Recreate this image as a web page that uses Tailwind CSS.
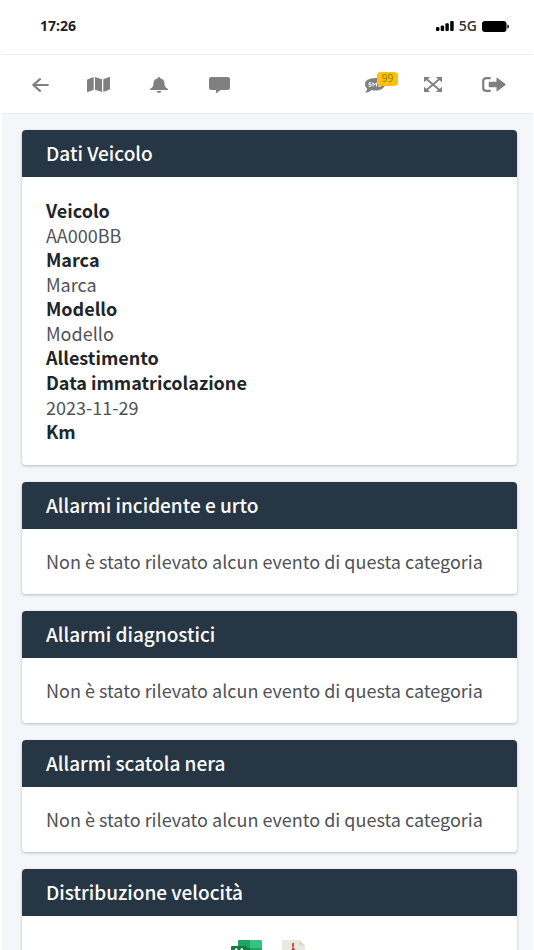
<!DOCTYPE html>
<html lang="it">
  <head>
    <meta charset="UTF-8" />
    <meta name="viewport" content="width=device-width, initial-scale=1.0" />
    <script src="https://cdn.jsdelivr.net/npm/@tailwindcss/browser@4"></script>
    <title>Dati Veicolo</title>
  </head>

  <body class="bg-white pl-0.5 pr-px font-['Noto_Sans_CJK_JP','Noto_Sans',sans-serif] text-lg leading-[25px] text-[#4f5256]">
    <div class="h-screen overflow-hidden bg-[#f4f6f9]">
      <!-- Status bar -->
      <div class="flex h-[54px] items-center justify-between bg-white pb-0.5 pl-[38px] pr-6">
        <span class="font-['Open_Sans',sans-serif] text-sm font-bold text-[#1c1c1e]">17:26</span>
        <div class="flex items-center gap-[5px] text-black">
          <svg class="h-[10px] w-[18px]" viewBox="0 0 18 10" fill="currentColor">
            <rect x="0" y="6" width="3.4" height="4" rx="1" />
            <rect x="4.7" y="4.5" width="3.4" height="5.5" rx="1" />
            <rect x="9.4" y="2.3" width="3.4" height="7.7" rx="1" />
            <rect x="14.2" y="0" width="3.5" height="10" rx="1" />
          </svg>
          <span class="font-['Open_Sans',sans-serif] text-sm font-semibold text-[#333]">5G</span>
          <svg class="h-[11px] w-[27px]" viewBox="0 0 27 11" fill="currentColor">
            <rect width="24.5" height="11" rx="3" />
            <path d="M25.3 3.6q1.7.5 1.7 1.900t-1.700 1.900z" />
          </svg>
        </div>
      </div>

      <!-- Navbar -->
      <nav class="flex h-[60px] items-center justify-between border-y border-[#e9ecef] bg-white pl-[25px] pr-[27px] pt-px text-[#808080]">
        <div class="flex items-center gap-[28px]">
          <button type="button" aria-label="Indietro" class="flex w-8 justify-start pl-[5px]">
            <svg class="h-[14px] w-[17px]" viewBox="0 0 17 14" fill="none" stroke="currentColor" stroke-width="2.2" stroke-linecap="round" stroke-linejoin="round">
              <path d="M8 1.2 1.3 7 8 12.8M1.5 7h14.3" />
            </svg>
          </button>
          <button type="button" aria-label="Mappa" class="flex w-8 justify-start">
            <svg class="h-[15px] w-[23px]" viewBox="0 0 23 15" fill="currentColor">
              <path d="M0 3.3q0-.7.8-1L6.7 0v12.8L1 14.9q-1 .3-1-.6zM8 0l7 2.2V15l-7-2.2zM16.3 2.2 22 .1q1-.3 1 .6v11q0 .7-.8 1L16.3 15z" />
            </svg>
          </button>
          <button type="button" aria-label="Notifiche" class="flex w-8 justify-start pl-[3px]">
            <svg class="h-[16px] w-[18px]" viewBox="0 0 18 16" fill="currentColor">
              <path d="M9 0q1.200 0 1.200 1.300 4.300.9 4.300 5.200 0 3.700 2.900 5 .6.4.6.900 0 .6-.8.6H.8q-.8 0-.8-.6 0-.5.600-.900Q3.500 10.200 3.500 6.500q0-4.300 4.300-5.200Q7.800 0 9 0zM6.600 14h4.800q-.4 2-2.400 2t-2.400-2z" />
            </svg>
          </button>
          <button type="button" aria-label="Messaggi" class="flex w-8 justify-start pl-[2px]">
            <svg class="h-[16px] w-[21px]" viewBox="0 0 21 16" fill="currentColor">
              <path d="M2.500 0h16Q21 0 21 2v9q0 2-2.500 2h-6.800L7.700 15.900q-.7.300-.7-.4V13H2.500Q0 13 0 11V2q0-2 2.500-2z" />
            </svg>
          </button>
        </div>
        <div class="flex items-center gap-[26px]">
          <button type="button" aria-label="SMS" class="relative flex w-[33px] justify-start">
            <svg class="mt-0.5 h-[15px] w-[20px]" viewBox="0 0 20 15" fill="currentColor">
              <path d="M10.500 0C16 0 20 2.700 20 6.200s-4 6.300-9.500 6.300q-2 0-3.800-.5Q4.600 14.300.8 14.700q-.8 0-.3-.7 1.500-1.600 1.700-3.300Q0 8.900 0 6.500 0 0 10.500 0z" />
              <path d="M6.300 4.800H4v1.600h2v1.800H3.600M8 8.400V4.800l1.800 2 1.800-2v3.600M16 4.800h-2.400v1.600h2v1.800h-2.300" fill="none" stroke="#fff" stroke-width="1" />
            </svg>
            <span class="absolute -top-[4px] left-3 h-[14px] w-[21px] rounded bg-[#ffc107] text-center font-['Open_Sans',sans-serif] text-[10px] leading-[13px] text-[#8c7430]">99</span>
          </button>
          <button type="button" aria-label="Schermo intero" class="flex w-[32px] justify-start">
            <svg class="h-[15px] w-[18px]" viewBox="0 0 18 15" fill="currentColor">
              <path d="M0 0h6.200L0 5.200zM11.800 0H18v5.200zM0 9.800 6.200 15H0zM18 9.800V15h-6.200z" />
              <path d="m2.200 1.800 13.600 11.400M15.800 1.800 2.200 13.200" fill="none" stroke="currentColor" stroke-width="1.900" />
            </svg>
          </button>
          <button type="button" aria-label="Esci" class="flex">
            <svg class="h-[15px] w-[24px]" viewBox="0 0 24 15" fill="currentColor">
              <path d="M8.700 1.200H4.500q-3.300 0-3.300 2.800v7q0 2.800 3.300 2.800h4.200" fill="none" stroke="currentColor" stroke-width="2.200" />
              <path d="M7.500 4.700h7V1.300q0-1.200 1.100-.4l7.900 6q.6.600 0 1.200l-7.900 6q-1.100.8-1.100-.4v-3.400h-7q-.8 0-.8-.8v-4q0-.8.8-.8z" />
            </svg>
          </button>
        </div>
      </nav>

      <!-- Cards -->
      <main class="space-y-[17px] pl-5 pr-4 pt-4">
        <section class="overflow-hidden rounded bg-white shadow-[0_1px_3px_rgba(0,0,0,0.25)]">
          <h2 class="bg-[#263644] px-6 pb-3 pt-[10px] text-[19px] font-medium text-white">Dati Veicolo</h2>
          <dl class="px-6 py-[21px]">
            <dt class="font-bold text-[#212529]">Veicolo</dt>
            <dd class="leading-6">AA000BB</dd>
            <dt class="font-bold text-[#212529]">Marca</dt>
            <dd class="leading-6">Marca</dd>
            <dt class="font-bold text-[#212529]">Modello</dt>
            <dd class="leading-6">Modello</dd>
            <dt class="font-bold text-[#212529]">Allestimento</dt>
            <dt class="font-bold text-[#212529]">Data immatricolazione</dt>
            <dd class="leading-6">2023-11-29</dd>
            <dt class="font-bold text-[#212529]">Km</dt>
          </dl>
        </section>

        <section class="overflow-hidden rounded bg-white shadow-[0_1px_3px_rgba(0,0,0,0.25)]">
          <h2 class="bg-[#263644] px-6 pb-3 pt-[10px] text-[19px] font-medium text-white">Allarmi incidente e urto</h2>
          <p class="px-6 py-5">Non è stato rilevato alcun evento di questa categoria</p>
        </section>

        <section class="overflow-hidden rounded bg-white shadow-[0_1px_3px_rgba(0,0,0,0.25)]">
          <h2 class="bg-[#263644] px-6 pb-3 pt-[10px] text-[19px] font-medium text-white">Allarmi diagnostici</h2>
          <p class="px-6 py-5">Non è stato rilevato alcun evento di questa categoria</p>
        </section>

        <section class="overflow-hidden rounded bg-white shadow-[0_1px_3px_rgba(0,0,0,0.25)]">
          <h2 class="bg-[#263644] px-6 pb-3 pt-[10px] text-[19px] font-medium text-white">Allarmi scatola nera</h2>
          <p class="px-6 py-5">Non è stato rilevato alcun evento di questa categoria</p>
        </section>

        <section class="overflow-hidden rounded bg-white shadow-[0_1px_3px_rgba(0,0,0,0.25)]">
          <h2 class="bg-[#263644] px-6 pb-3 pt-[10px] text-[19px] font-medium text-white">Distribuzione velocità</h2>
          <div class="flex justify-center gap-5 py-6 pl-5 pr-6">
            <button type="button" aria-label="Esporta Excel">
              <svg class="h-[28px] w-[31px]" viewBox="0 0 31 28">
                <path fill="#21a366" d="M7 1q0-1 1-1h11v8H7z" />
                <path fill="#33c481" d="M19 0h11q1 0 1 1v7H19z" />
                <path fill="#107c41" d="M7 8h12v7H7z" />
                <path fill="#21a366" d="M19 8h12v7H19z" />
                <path fill="#185c37" d="M7 15h24v12q0 1-1 1H8q-1 0-1-1z" />
                <rect y="6" width="16" height="16" rx="1" fill="#107c41" />
                <path d="m4.500 8.500 7 10M11.500 8.500l-7 10" stroke="#fff" stroke-width="2.200" />
              </svg>
            </button>
            <button type="button" aria-label="Esporta PDF">
              <svg class="h-[28px] w-[23px]" viewBox="0 0 23 28">
                <path fill="#e9e9e0" d="M1 0h16l6 5.500V27q0 1-1 1H1q-1 0-1-1V1q0-1 1-1z" />
                <path fill="#d9d7ca" d="M17 0v5.500h6z" />
                <path d="M11.500 3.500q-1.500 0-.7 3 1.200 4.500 6.200 6.500 2 .5 1.500-.6-2.500-1.400-8 .3-5 1.800-5.500 3.600 1.500 1 4-3.800 2.600-5 2.500-9z" fill="none" stroke="#cc4b4c" stroke-width="1.300" />
                <path fill="#cc4b4c" d="M0 19h23v8q0 1-1 1H1q-1 0-1-1z" />
              </svg>
            </button>
          </div>
        </section>
      </main>
    </div>
  </body>
</html>
